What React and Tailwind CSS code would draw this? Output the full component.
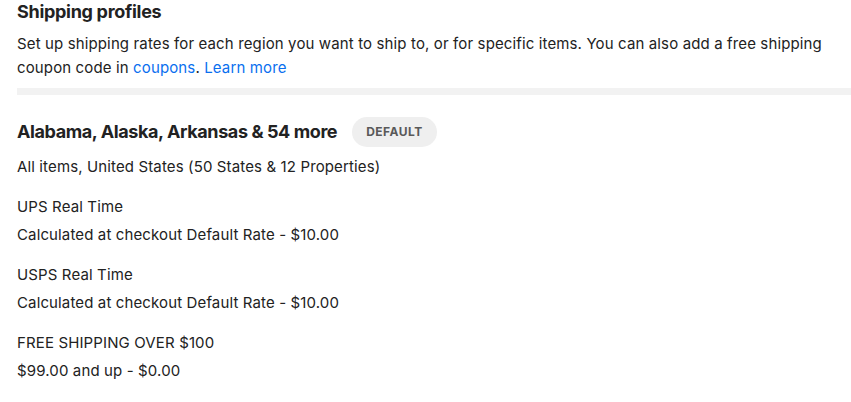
const rates = [
  { name: 'UPS Real Time', value: 'Calculated at checkout Default Rate - $10.00' },
  { name: 'USPS Real Time', value: 'Calculated at checkout Default Rate - $10.00' },
  { name: 'FREE SHIPPING OVER $100', value: '$99.00 and up - $0.00' },
]

export default function App() {
  return (
    <div className="min-h-screen bg-white pl-[17px] text-[#222222]" style={{ fontFamily: 'Inter, "Noto Sans", sans-serif' }}>
      <h1 className="text-[18px] font-bold leading-6 tracking-[-0.3px]">Shipping profiles</h1>
      <p className="mt-2 text-[15px] leading-6 tracking-[0.13px]">
        Set up shipping rates for each region you want to ship to, or for specific items. You can also add a free shipping
        coupon code in <a href="#" className="text-[#0a6fef]">coupons</a>. <a href="#" className="text-[#0a6fef]">Learn more</a>
      </p>
      <div className="mt-2 h-[7px] bg-[#f2f2f2]" />

      <div className="mt-[22px] flex h-[30px] items-center gap-[15px]">
        <h2 className="text-[18px] font-bold leading-6 tracking-[-0.4px]">Alabama, Alaska, Arkansas &amp; 54 more</h2>
        <span className="flex h-[30px] items-center rounded-full bg-[#efefef] px-[14px] text-[12px] font-bold tracking-[0.04em] text-[#595959]">
          DEFAULT
        </span>
      </div>
      <p className="mt-2 text-[15px] leading-6 tracking-[0.13px]">All items, United States (50 States &amp; 12 Properties)</p>

      <div className="mt-4 flex flex-col gap-4">
        {rates.map((r) => (
          <div key={r.name} className="flex flex-col gap-1 text-[15px] leading-6 tracking-[0.13px]">
            <p>{r.name}</p>
            <p>{r.value}</p>
          </div>
        ))}
      </div>
    </div>
  )
}
